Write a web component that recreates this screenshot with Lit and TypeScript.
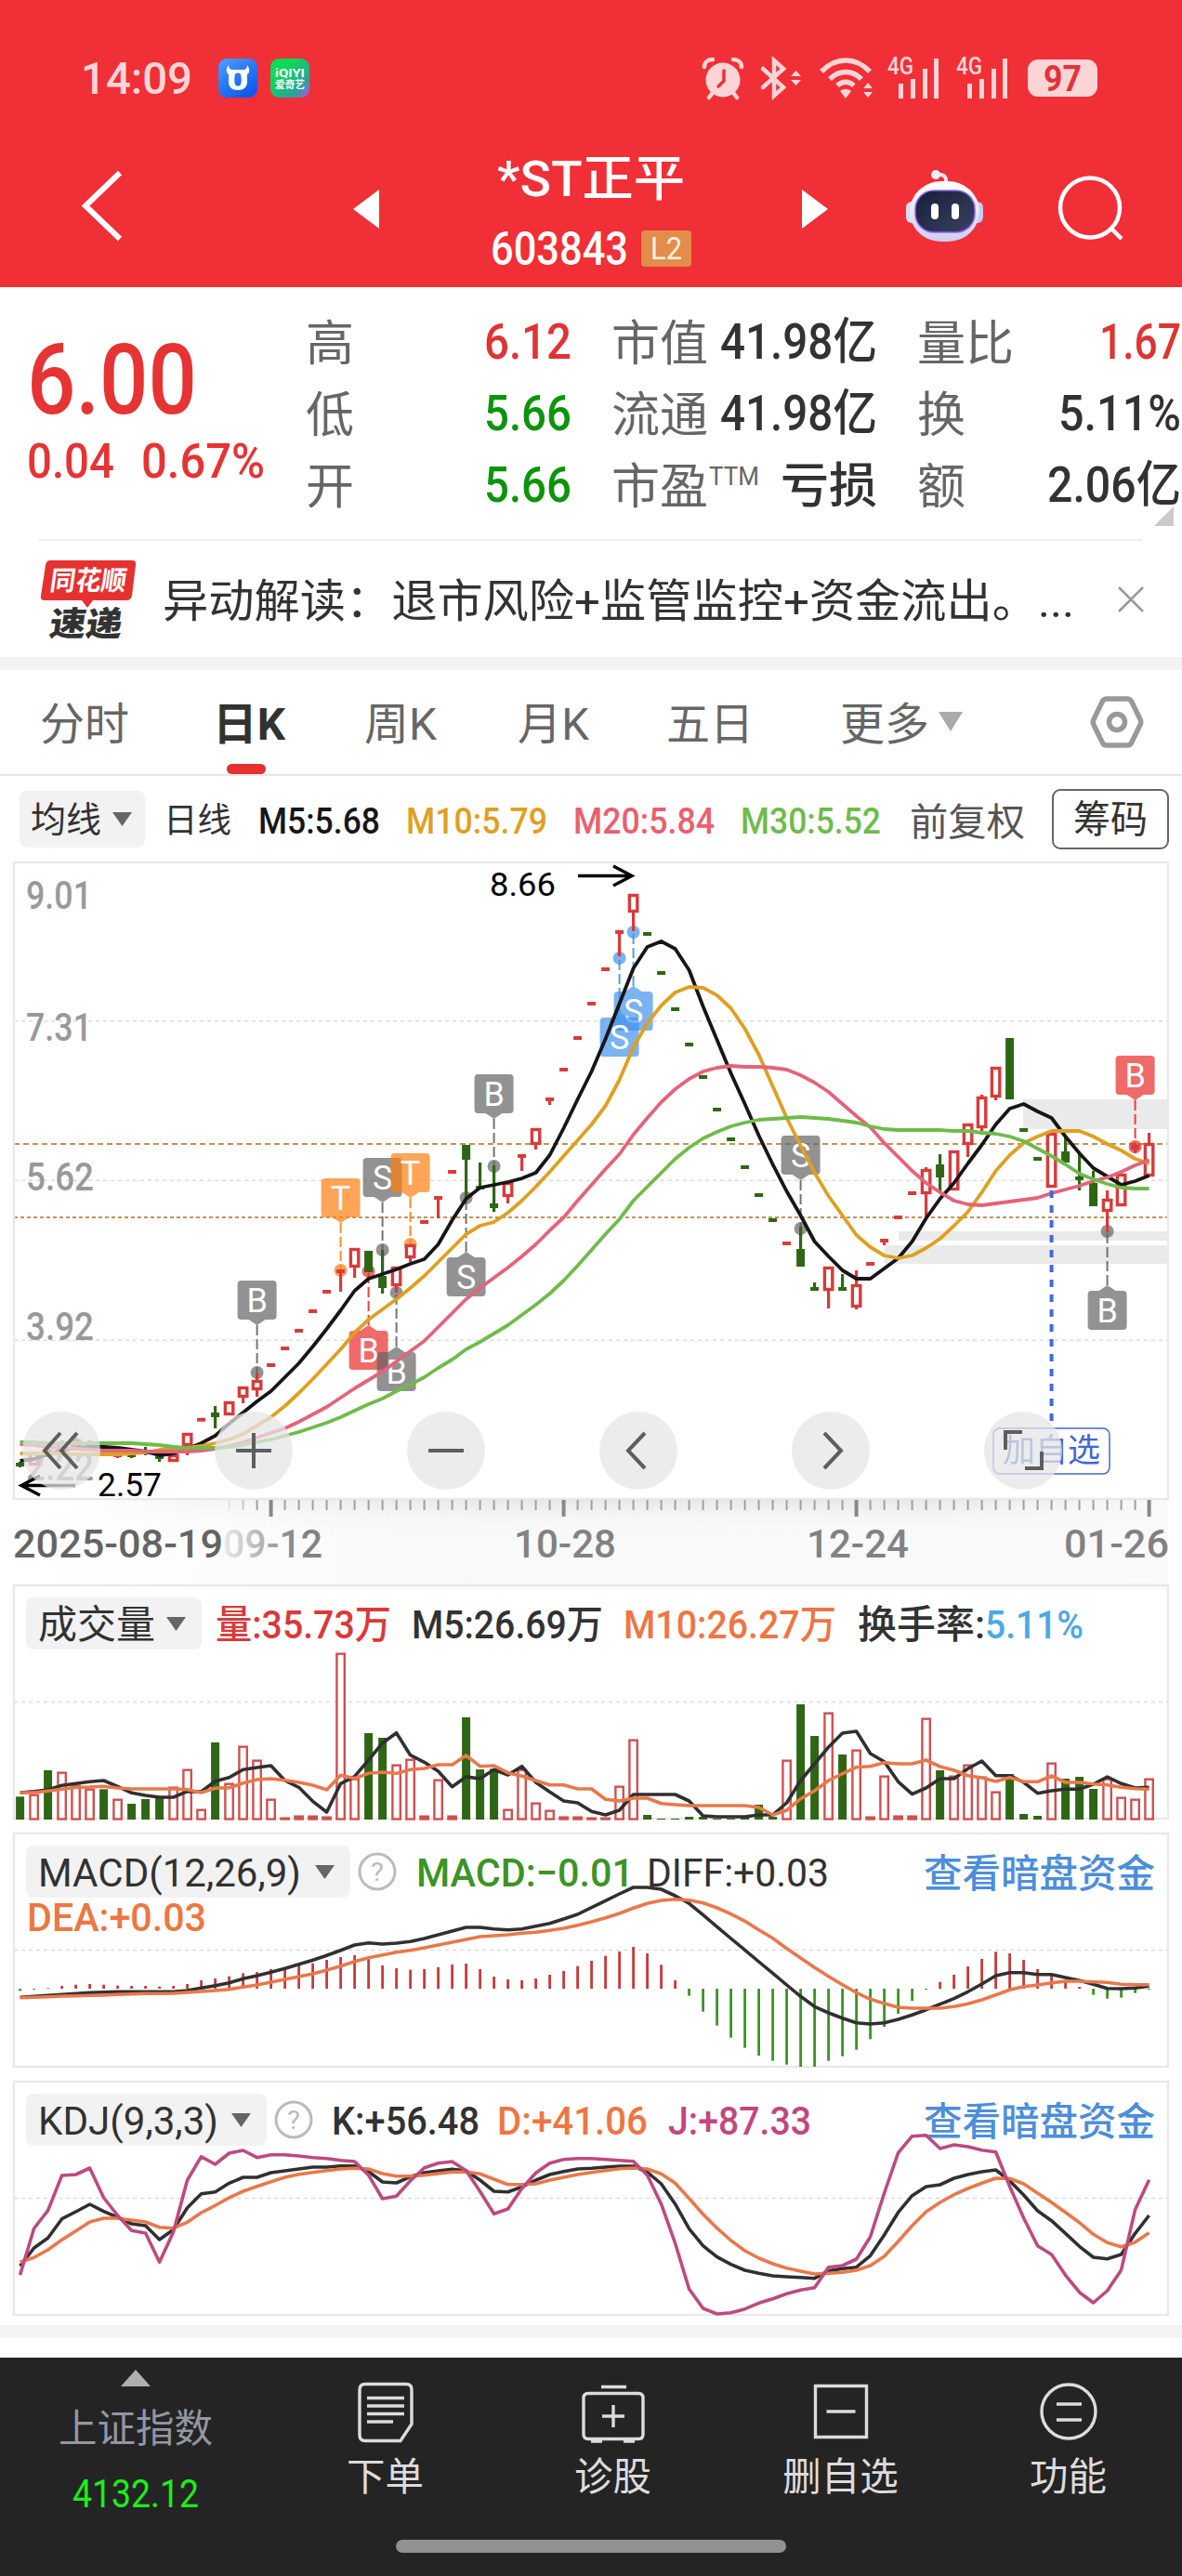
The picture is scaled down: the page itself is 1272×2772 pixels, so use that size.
import { LitElement, css, html, nothing, svg } from "lit";
import { customElement, property } from "lit/decorators.js";

type Candle = [high: number, top: number, bottom: number, low: number, up: boolean];

type Marker = {
  at: number;
  letter: string;
  tone: string;
  box: number;
  dot: number;
};

const STEP = 15;
const FIRST_X = 21.6;
const COUNT = 82;

const xOf = (index: number): number => FIRST_X + index * STEP;

const r = (high: number, top: number, bottom: number, low: number): Candle => [high, top, bottom, low, true];
const g = (high: number, top: number, bottom: number, low: number): Candle => [high, top, bottom, low, false];
// one-price day: a short dash
const up = (y: number): Candle => r(y - 2, y - 2, y + 2, y + 2);
const dn = (y: number): Candle => g(y - 2, y - 2, y + 2, y + 2);

const CANDLES: Candle[] = [
  g(1573, 1574, 1578, 1579), r(1562, 1563, 1577, 1577), g(1556, 1560, 1565, 1568), r(1550, 1552, 1560, 1562),
  r(1546, 1549, 1557, 1559), r(1550, 1552, 1556, 1562), g(1554, 1558, 1562, 1565), r(1562, 1564, 1567, 1569),
  g(1560, 1564, 1567, 1569), g(1557, 1561, 1564, 1566), g(1563, 1565, 1570, 1573), r(1564, 1565, 1573, 1573),
  r(1542, 1542, 1556, 1566), up(1527.7), g(1513, 1520, 1525, 1537), r(1508, 1508, 1523, 1523),
  r(1492, 1492, 1504, 1510), r(1477, 1485, 1496, 1503), up(1469), up(1451),
  up(1432), up(1411), up(1390), r(1366, 1366, 1370, 1390),
  r(1343, 1343, 1364, 1375), g(1346, 1346, 1369, 1369), g(1345, 1373, 1386, 1392), r(1363, 1363, 1384, 1391),
  r(1339, 1339, 1354, 1358), up(1315), r(1287, 1287, 1291, 1311), up(1261),
  g(1232, 1232, 1248, 1290), g(1251, 1276, 1279, 1279), g(1254, 1295, 1300, 1304), r(1272, 1272, 1288, 1295),
  r(1242, 1242, 1246, 1260), r(1214, 1214, 1232, 1237), r(1181, 1181, 1185, 1189), up(1151),
  up(1117), up(1080), up(1043), r(1001, 1001, 1005, 1029),
  r(962, 962, 982, 1002), dn(1005), dn(1047), dn(1086),
  dn(1124), dn(1159), dn(1194), dn(1226),
  dn(1256), dn(1286), dn(1313), up(1338),
  g(1320, 1344, 1363, 1363), g(1380, 1385, 1388, 1388), r(1363, 1363, 1389, 1408), g(1371, 1385, 1389, 1389),
  r(1367, 1382, 1407, 1409), up(1360), r(1333, 1333, 1337, 1340), up(1310),
  up(1284), r(1256, 1258, 1285, 1311), g(1242, 1253, 1267, 1282), r(1238, 1238, 1281, 1281),
  r(1209, 1209, 1232, 1245), r(1178, 1180, 1214, 1217), r(1148, 1148, 1181, 1184), g(1117, 1117, 1183, 1183),
  dn(1216), dn(1247), r(1219, 1219, 1278, 1278), g(1222, 1239, 1251, 1251),
  g(1241, 1266, 1269, 1281), g(1260, 1273, 1298, 1298), r(1281, 1290, 1304, 1326), r(1263, 1263, 1298, 1298),
  r(1231, 1232, 1237, 1241), r(1219, 1230, 1266, 1266)
];

const MA5 = [
  1572, 1570, 1565, 1561, 1558, 1557, 1557, 1558, 1560, 1562, 1566, 1564, 1559, 1553, 1545, 1532, 1520, 1508, 1497,
  1482, 1467, 1449, 1430, 1410, 1389, 1376, 1371, 1366, 1360, 1355, 1339, 1313, 1290, 1278, 1275, 1272, 1268, 1262,
  1243, 1214, 1183, 1153, 1118, 1080, 1042, 1019, 1013, 1021, 1044, 1083, 1119, 1155, 1188, 1222, 1253, 1282, 1308,
  1336, 1352, 1367, 1376, 1376, 1365, 1354, 1336, 1311, 1290, 1273, 1252, 1232, 1210, 1193, 1188, 1196, 1203, 1223,
  1241, 1257, 1266, 1275, 1271, 1265
];

const MA10 = [
  1564, 1564, 1564, 1564, 1565, 1565, 1565, 1565, 1564, 1563, 1560, 1559, 1558, 1556, 1553, 1549, 1543, 1534, 1525,
  1513, 1499, 1484, 1468, 1452, 1434, 1420, 1409, 1398, 1386, 1373, 1358, 1343, 1328, 1319, 1315, 1305, 1292, 1277,
  1261, 1244, 1227, 1210, 1190, 1162, 1127, 1101, 1082, 1068, 1062, 1063, 1071, 1085, 1107, 1135, 1169, 1203, 1233,
  1262, 1287, 1308, 1329, 1342, 1351, 1354, 1351, 1343, 1333, 1319, 1304, 1283, 1260, 1243, 1230, 1223, 1217, 1217,
  1217, 1223, 1231, 1238, 1247, 1252
];

const MA20 = [
  1554, 1555, 1557, 1558, 1559, 1560, 1561, 1561, 1561, 1562, 1562, 1562, 1562, 1561, 1559, 1556, 1552, 1547, 1542,
  1537, 1530, 1522, 1514, 1504, 1494, 1485, 1476, 1465, 1454, 1443, 1428, 1413, 1398, 1386, 1375, 1364, 1352, 1339,
  1324, 1310, 1292, 1275, 1258, 1242, 1221, 1203, 1186, 1172, 1161, 1153, 1149, 1147, 1148, 1148, 1149, 1151, 1157,
  1165, 1175, 1188, 1201, 1213, 1230, 1245, 1260, 1273, 1283, 1292, 1296, 1297, 1295, 1293, 1291, 1289, 1284, 1280,
  1276, 1271, 1267, 1261, 1254, 1248
];

const MA30 = [
  1552, 1552, 1553, 1553, 1553, 1553, 1553, 1553, 1553, 1554, 1555, 1557, 1558, 1558, 1558, 1557, 1555, 1552, 1549,
  1545, 1541, 1536, 1531, 1525, 1518, 1511, 1505, 1497, 1490, 1482, 1472, 1463, 1452, 1444, 1435, 1426, 1415, 1404,
  1392, 1378, 1362, 1345, 1328, 1312, 1292, 1277, 1262, 1247, 1235, 1225, 1218, 1212, 1208, 1205, 1204, 1203, 1202,
  1203, 1204, 1206, 1208, 1212, 1215, 1216, 1216, 1216, 1216, 1217, 1217, 1219, 1220, 1223, 1228, 1236, 1244, 1253,
  1263, 1269, 1274, 1278, 1279, 1279
];

const MARKERS: Marker[] = [
  { at: 17, letter: "B", tone: "gray", box: 1378, dot: 1477 },
  { at: 23, letter: "T", tone: "orange", box: 1268, dot: 1367 },
  { at: 26, letter: "S", tone: "gray", box: 1246, dot: 1345 },
  { at: 28, letter: "T", tone: "orange", box: 1241, dot: 1339 },
  { at: 25, letter: "B", tone: "red", box: 1432, dot: 1368 },
  { at: 27, letter: "B", tone: "gray", box: 1455, dot: 1391 },
  { at: 32, letter: "S", tone: "gray", box: 1353, dot: 1289 },
  { at: 34, letter: "B", tone: "gray", box: 1156, dot: 1255 },
  { at: 44, letter: "S", tone: "blue", box: 1067, dot: 1003 },
  { at: 43, letter: "S", tone: "blue", box: 1095, dot: 1031 },
  { at: 56, letter: "S", tone: "gray", box: 1222, dot: 1322 },
  { at: 78, letter: "B", tone: "gray", box: 1389, dot: 1325 },
  { at: 80, letter: "B", tone: "red", box: 1136, dot: 1234 }
];

// The indicator series below are stored in thirds of a pixel, measured from the top of their panel's slot.
const VOL = [
  730, 722, 645, 650, 692, 704, 706, 737, 753, 738, 735, 698, 641, 770, 555, 686, 566, 611, 737, 797, 791, 791, 794,
  266, 671, 525, 540, 626, 608, 791, 674, 791, 474, 642, 640, 770, 641, 749, 773, 794, 794, 797, 797, 695, 545, 789,
  801, 801, 795, 795, 801, 801, 798, 756, 795, 611, 432, 534, 458, 594, 578, 794, 662, 791, 791, 476, 645, 662, 626,
  665, 713, 657, 786, 792, 620, 672, 666, 705, 671, 731, 737, 671
];
const VOL_DOWN = new Set([
  0, 2, 6, 8, 9, 10, 14, 25, 26, 32, 33, 34, 45, 46, 47, 48, 49, 50, 51, 52, 53, 54, 56, 57, 59, 66, 71, 72, 73, 75,
  76, 77
]);
const VOL_MA5 = [
  717, 713, 708, 694, 688, 682, 678, 697, 718, 726, 732, 732, 713, 714, 680, 668, 643, 636, 630, 678, 700, 745, 780,
  688, 665, 612, 557, 524, 596, 619, 648, 698, 666, 672, 643, 660, 632, 684, 715, 744, 750, 778, 789, 774, 723, 723,
  723, 723, 744, 792, 795, 795, 795, 789, 789, 750, 678, 624, 570, 525, 519, 591, 617, 682, 722, 702, 672, 672, 640,
  615, 662, 662, 684, 719, 711, 706, 706, 690, 666, 688, 702, 700
];
const VOL_MA10 = [
  717, 717, 712, 706, 700, 699, 697, 702, 705, 705, 705, 705, 707, 717, 703, 701, 686, 675, 672, 677, 684, 693, 708,
  661, 671, 655, 651, 655, 643, 639, 627, 627, 597, 632, 630, 653, 664, 678, 692, 692, 705, 705, 739, 744, 735, 735,
  752, 756, 759, 759, 759, 759, 759, 765, 789, 774, 737, 711, 678, 656, 635, 632, 620, 624, 624, 612, 633, 645, 662,
  669, 681, 668, 682, 682, 663, 684, 684, 689, 692, 700, 704, 706
];

const MACD = [
  547, 543, 538, 531, 527, 525, 527, 530, 531, 531, 533, 531, 525, 513, 507, 500, 490, 486, 477, 471, 465, 458, 447,
  438, 432, 444, 465, 474, 479, 477, 471, 462, 459, 477, 501, 510, 513, 507, 495, 483, 467, 450, 434, 420, 405, 426,
  463, 513, 563, 614, 659, 698, 731, 756, 773, 785, 792, 792, 773, 758, 737, 703, 663, 621, 579, 543, 518, 495, 468,
  444, 421, 426, 447, 477, 495, 512, 534, 560, 572, 569, 554, 543
];
const DIFF = [
  568, 565, 562, 559, 556, 553, 551, 550, 550, 550, 550, 550, 546, 538, 530, 521, 508, 498, 487, 475, 461, 448, 433,
  416, 399, 392, 396, 393, 388, 378, 366, 354, 342, 342, 347, 350, 347, 338, 329, 315, 300, 278, 256, 234, 213, 213,
  219, 240, 265, 302, 340, 378, 415, 453, 490, 528, 565, 598, 618, 635, 650, 654, 650, 639, 625, 608, 590, 572, 550,
  525, 498, 488, 488, 494, 494, 504, 514, 526, 539, 540, 538, 532
];
const DEA = [
  569, 568, 566, 564, 563, 562, 561, 559, 557, 556, 556, 555, 552, 549, 546, 542, 535, 528, 519, 510, 501, 492, 480,
  467, 452, 440, 431, 422, 416, 408, 399, 390, 381, 372, 369, 366, 361, 358, 352, 345, 335, 324, 311, 297, 280, 265,
  255, 251, 254, 263, 279, 299, 322, 350, 377, 410, 441, 472, 500, 527, 553, 574, 588, 600, 603, 603, 603, 598, 589,
  576, 560, 544, 533, 528, 521, 516, 516, 518, 520, 526, 527, 527
];

const K = [
  625, 567, 535, 473, 450, 426, 449, 468, 489, 495, 540, 508, 437, 392, 386, 358, 339, 339, 324, 318, 312, 306, 306,
  302, 302, 320, 354, 357, 337, 324, 318, 313, 318, 348, 384, 386, 370, 348, 330, 320, 312, 310, 306, 303, 303, 322,
  360, 425, 505, 560, 596, 620, 639, 649, 657, 660, 662, 665, 641, 634, 629, 592, 525, 452, 398, 369, 363, 342, 330,
  321, 315, 350, 396, 447, 479, 520, 562, 597, 602, 588, 520, 462
];
const D = [
  613, 598, 573, 541, 512, 483, 471, 471, 477, 483, 500, 503, 484, 453, 430, 405, 384, 368, 353, 339, 329, 323, 317,
  312, 310, 312, 327, 335, 335, 332, 327, 322, 321, 328, 345, 362, 362, 360, 348, 339, 330, 323, 317, 311, 309, 312,
  328, 358, 407, 458, 503, 543, 576, 600, 618, 632, 642, 651, 649, 646, 639, 624, 594, 546, 495, 450, 420, 395, 375,
  358, 342, 343, 360, 390, 420, 452, 485, 523, 550, 563, 548, 518
];
const J = [
  654, 504, 446, 333, 330, 309, 405, 462, 511, 519, 613, 515, 348, 272, 297, 261, 252, 275, 266, 266, 270, 275, 278,
  284, 288, 332, 408, 400, 350, 308, 293, 288, 317, 385, 457, 441, 375, 325, 293, 281, 278, 278, 281, 284, 287, 332,
  425, 552, 700, 762, 780, 776, 764, 745, 731, 715, 703, 695, 629, 624, 603, 531, 390, 260, 206, 203, 246, 234, 240,
  251, 257, 368, 470, 560, 588, 655, 710, 744, 705, 638, 443, 347
];

const thirds = (values: number[]): number[] => values.map((value) => value / 3);

const line = (values: number[], name: string) =>
  svg`<polyline class="line ${name}" points=${values.map((y, i) => `${xOf(i).toFixed(1)},${y.toFixed(1)}`).join(" ")} />`;

const fit = (text: string, width: number, size: number, name = "") => html`
  <svg class="fit ${name}" width=${width} height=${size}>
    <text x="0" y=${size * 0.857} font-size=${size} textLength=${width} lengthAdjust="spacingAndGlyphs">${text}</text>
  </svg>
`;

const label = (text: string, x: number, middle: number, width: number, size: number, name: string) =>
  svg`<text class=${name} x=${x} y=${middle + size * 0.357} font-size=${size} textLength=${width} lengthAdjust="spacingAndGlyphs">${text}</text>`;

const caret = html`<svg class="caret" width="21" height="15" viewBox="0 0 21 15"><path d="M0 0h21L10.500 15z" /></svg>`;

const shared = css`
  svg {
    display: block;
    flex: none;
    overflow: visible;
  }

  text {
    fill: currentColor;
    font-family: Roboto, "Noto Sans CJK SC", sans-serif;
    white-space: pre;
  }

  .medium {
    font-weight: 500;
  }

  .bold {
    font-weight: 700;
  }

  .caret {
    fill: #666;
  }

  .chip {
    align-items: center;
    background: #f2f2f2;
    border-radius: 8px;
    box-sizing: border-box;
    display: flex;
    justify-content: space-between;
  }

  .line {
    fill: none;
    stroke-linejoin: round;
    stroke-width: 3.800;
  }

  .grid {
    stroke: #dcdcdc;
    stroke-dasharray: 4 4;
    stroke-width: 1.5;
  }

  .frame {
    fill: none;
    stroke: #e9e9e9;
    stroke-width: 2.400;
  }
`;

@customElement("status-bar")
export class StatusBar extends LitElement {
  private renderSignal() {
    return html`
      <svg class="signal" width="56" height="44" viewBox="0 0 56 44">
        ${label("4G", 0, 9, 28, 25, "medium")}
        <path d="M12 28h5v16h-5zM25 23h5v21h-5zM38 12h5v32h-5zM50 1h5v43h-5z" />
      </svg>
    `;
  }

  protected render() {
    return html`
      <div class="bar">
        ${fit("14:09", 120, 48, "medium time")}
        <svg class="app" width="42" height="42" viewBox="0 0 42 42">
          <defs>
            <linearGradient id="blue" x1="0" y1="0" x2=".7" y2="1">
              <stop offset="0" stop-color="#4ba0ff" />
              <stop offset="1" stop-color="#0d58ea" />
            </linearGradient>
          </defs>
          <rect width="42" height="42" rx="9" fill="url(#blue)" />
          <path
            d="M11 7c0 3 1 4 3 5h14c2-1 3-2 3-5 3 4 3 8 0 10v8c0 6-4 9-10 9s-10-3-10-9v-8c-3-2-3-6 0-10zM18 17c-1 5-1 8 0 11 1 2 5 2 6 0 1-3 1-6 0-11-1-2-5-2-6 0z"
            fill="#fff"
            fill-rule="evenodd"
          />
        </svg>
        <svg class="app second" width="42" height="42" viewBox="0 0 42 42">
          <defs>
            <linearGradient id="green" x1="0" y1="0" x2="1" y2="1">
              <stop offset="0.300" stop-color="#0bd957" />
              <stop offset="0.750" stop-color="#26a39b" />
              <stop offset="1" stop-color="#c44cf2" />
            </linearGradient>
          </defs>
          <rect width="42" height="42" rx="9" fill="url(#green)" />
          ${label("iQIYI", 5, 15, 32, 13, "bold")} ${label("爱奇艺", 5, 28, 32, 11, "bold")}
        </svg>
        <svg class="alarm" width="44" height="44" viewBox="0 0 44 44">
          <circle cx="22" cy="24" r="18.500" />
          <path class="stroke" d="M2 10c0-5 4-8 9-8M42 10c0-5-4-8-9-8M10 39l-3 4M34 39l3 4" />
          <path class="hand" d="M23 14v11l-6 6" />
        </svg>
        <svg class="bt" width="44" height="44" viewBox="0 0 44 44">
          <path class="stroke" d="M2 12l22 20-10 9V3l10 9L2 32" />
          <path d="M32 20l5.500-6 5.500 6zM32 24l5.500 6 5.500-6z" />
        </svg>
        <svg class="wifi" width="58" height="44" viewBox="0 0 58 44">
          <path class="arc" d="M2 15c15-16 37-16 52 0M11 23c10-10 24-10 34 0M19 30c6-5 12-5 18 0" />
          <path d="M22 36c4-3 8-3 12 0l-6 8zM47 33l5-6 5 6zM47 37l5 6 5-6z" />
        </svg>
        ${this.renderSignal()} ${this.renderSignal()}
        <div class="battery">${fit("97", 41, 38, "bold")}</div>
      </div>
    `;
  }

  static styles = [
    shared,
    css`
      :host {
        display: block;
      }

      .bar {
        align-items: center;
        box-sizing: border-box;
        color: #fdd5d6;
        display: flex;
        fill: currentColor;
        height: 125px;
        padding: 42px 0 0 87px;
      }

      .app {
        color: #fff;
        margin-left: 28px;
      }

      .second {
        margin-left: 14px;
      }

      .alarm {
        margin-left: 423px;
      }

      .bt {
        margin-left: 19px;
      }

      .wifi {
        margin-left: 19px;
      }

      .signal {
        margin-left: 15px;
      }

      .signal + .signal {
        margin-left: 18px;
      }

      .stroke,
      .hand,
      .arc {
        fill: none;
        stroke: currentColor;
        stroke-linecap: round;
        stroke-width: 4.500;
      }

      .arc {
        stroke-linecap: butt;
        stroke-width: 5.500;
      }

      .hand {
        stroke: #f12f37;
        stroke-width: 3.500;
      }

      .battery {
        align-items: center;
        background: currentColor;
        border-radius: 11px;
        display: flex;
        height: 40px;
        justify-content: center;
        margin-left: 21px;
        width: 75px;
      }

      .battery .fit {
        color: #e2333a;
      }
    `
  ];
}

@customElement("stock-header")
export class StockHeader extends LitElement {
  @property() name = "";

  @property() code = "";

  protected render() {
    return html`
      <div class="header">
        <svg class="back" width="60" height="84" viewBox="80 180 60 84">
          <path class="stroke thick" d="M129 186L92 221.500L129 257" />
        </svg>
        <svg class="prev" width="28" height="42" viewBox="0 0 28 42"><path d="M28 0v42L0 21z" /></svg>
        <div class="title">
          ${fit(this.name, 202, 53, "medium")}
          <div class="code">
            ${fit(this.code, 148, 50, "medium")}
            <div class="badge">${fit("L2", 34, 33)}</div>
          </div>
        </div>
        <svg class="next" width="28" height="42" viewBox="0 0 28 42"><path d="M0 0v42l28-21z" /></svg>
        <svg class="robot" width="94" height="84" viewBox="970 180 94 84">
          <defs>
            <linearGradient id="head" x1="0" y1="0" x2="0" y2="1">
              <stop offset="0" stop-color="#fff" />
              <stop offset="1" stop-color="#cfccf3" />
            </linearGradient>
            <linearGradient id="face" x1="0" y1="0" x2="1" y2="1">
              <stop offset="0" stop-color="#16203a" />
              <stop offset="1" stop-color="#3c4063" />
            </linearGradient>
          </defs>
          <path d="M1017 198c3-7-1-11-9-10" fill="none" stroke="#e4e2f8" stroke-width="4" />
          <circle cx="1007" cy="188" r="5" fill="#f0eefc" />
          <rect x="975" y="217" width="14" height="23" rx="6" fill="#d9dcf8" />
          <rect x="1044" y="217" width="14" height="23" rx="6" fill="#c6c9f1" />
          <rect x="979" y="195" width="75" height="65" rx="34" fill="url(#head)" />
          <rect x="985" y="205" width="64" height="45" rx="20" fill="url(#face)" stroke="#8a67ea" stroke-width="1.500" />
          <rect x="1002" y="219" width="8" height="17" rx="4" fill="#fff" />
          <rect x="1024" y="219" width="8" height="17" rx="4" fill="#fff" />
        </svg>
        <svg class="search" width="76" height="84" viewBox="1136 180 76 84">
          <circle class="stroke" cx="1173" cy="223.500" r="32" />
          <path class="stroke" d="M1195 245l12 12" />
        </svg>
      </div>
    `;
  }

  static styles = [
    shared,
    css`
      :host {
        display: block;
      }

      .header {
        align-items: flex-start;
        color: #fff;
        display: flex;
        fill: #fff;
        height: 184px;
      }

      .back {
        margin: 55px 0 0 80px;
      }

      .prev {
        margin: 79px 0 0 240px;
      }

      .next {
        margin: 79px 0 0 82px;
      }

      .title {
        align-items: center;
        display: flex;
        flex-direction: column;
        gap: 23px;
        margin-left: 83px;
        padding-top: 41px;
        width: 290px;
      }

      .code {
        align-items: center;
        display: flex;
        gap: 14px;
      }

      .badge {
        align-items: center;
        background: #e28d4b;
        border-radius: 4px;
        color: #fff3dc;
        display: flex;
        height: 39px;
        justify-content: center;
        width: 54px;
      }

      .robot {
        margin: 55px 0 0 79px;
      }

      .search {
        margin: 55px 0 0 72px;
      }

      .stroke {
        fill: none;
        stroke: #fff;
        stroke-width: 4.500;
      }

      .thick {
        stroke-width: 6;
      }
    `
  ];
}

@customElement("quote-panel")
export class QuotePanel extends LitElement {
  protected render() {
    return html`
      <div class="quote">
        <div class="price">
          ${fit("6.00", 183, 105, "medium")}
          <div class="change">${fit("0.04", 94, 51, "medium")} ${fit("0.67%", 133, 51, "medium")}</div>
        </div>
        <div class="figures">
          <div class="cell"><span>高</span>${fit("6.12", 94, 53, "medium up")}</div>
          <div class="cell"><span>市值</span>${fit("41.98亿", 169, 53, "medium")}</div>
          <div class="cell"><span>量比</span>${fit("1.67", 88, 53, "medium up")}</div>
          <div class="cell"><span>低</span>${fit("5.66", 94, 53, "medium down")}</div>
          <div class="cell"><span>流通</span>${fit("41.98亿", 169, 53, "medium")}</div>
          <div class="cell"><span>换</span>${fit("5.11%", 132, 53, "medium")}</div>
          <div class="cell"><span>开</span>${fit("5.66", 94, 53, "medium down")}</div>
          <div class="cell">
            <span>市盈</span><div class="ttm">${fit("TTM", 54, 27)}</div>
            ${fit("亏损", 104, 52, "medium")}
          </div>
          <div class="cell"><span>额</span>${fit("2.06亿", 144, 53, "medium")}</div>
        </div>
      </div>
      <div class="fold"><svg width="21" height="21" viewBox="0 0 21 21"><path d="M21 0v21H0z" /></svg></div>
      <div class="rule"></div>
      <div class="news">
        <svg width="104" height="86" viewBox="43 601 104 86">
          <path
            d="M54 602h88q5 0 4 5l-4 33q-1 5-6 5h-36l-6 8-6-8H48q-5 0-4-5l5-33q1-5 5-5z"
            fill="#e63131"
          />
          <g transform="skewX(-8)">
            ${label("同花顺", 142, 624, 82, 29, "bold white")} ${label("速递", 148, 670, 78, 36, "black")}
          </g>
        </svg>
        ${fit("异动解读：退市风险+监管监控+资金流出。...", 981, 49, "text")}
        <svg class="close" width="28" height="28" viewBox="0 0 28 28"><path d="M1 1l26 26M27 1L1 27" /></svg>
      </div>
    `;
  }

  static styles = [
    shared,
    css`
      :host {
        display: block;
      }

      .quote {
        display: flex;
        height: 235px;
      }

      .price {
        box-sizing: border-box;
        color: #e63333;
        display: flex;
        flex-direction: column;
        gap: 10px;
        padding: 45px 0 0 29px;
        width: 329px;
      }

      .change {
        display: flex;
        gap: 29px;
      }

      .figures {
        align-content: start;
        color: #323232;
        column-gap: 43px;
        display: grid;
        grid-template-columns: 286px 286px 284px;
        grid-auto-rows: 77px;
        padding-top: 19px;
      }

      .cell {
        align-items: center;
        display: flex;
        justify-content: space-between;
      }

      .cell span {
        color: #666;
        font: 52px "Noto Sans CJK SC", sans-serif;
        line-height: 74px;
        margin-bottom: 3px;
      }

      .ttm {
        align-self: flex-start;
        color: #666;
        margin: 16px 20px 0 -2px;
      }

      .up {
        color: #e03333;
      }

      .down {
        color: #0c940c;
      }

      .fold {
        display: flex;
        fill: #cacaca;
        height: 35px;
        padding-left: 1242px;
      }

      .rule {
        background: #eee;
        height: 2px;
        margin: 0 42px;
      }

      .news {
        align-items: center;
        color: #323232;
        display: flex;
        height: 125px;
        padding-left: 43px;
      }

      .news .text {
        margin: 4px 0 0 28px;
      }

      .white {
        fill: #fff;
      }

      .black {
        fill: #333;
        font-weight: 900;
      }

      .close {
        margin-left: 47px;
        stroke: #999;
        stroke-width: 2.500;
      }
    `
  ];
}

@customElement("period-tabs")
export class PeriodTabs extends LitElement {
  protected render() {
    return html`
      <div class="tabs">
        <div class="tab">${fit("分时", 96, 48)}</div>
        <div class="tab active">${fit("日K", 78, 48, "bold")}<i></i></div>
        <div class="tab">${fit("周K", 78, 48)}</div>
        <div class="tab">${fit("月K", 77, 48)}</div>
        <div class="tab">${fit("五日", 94, 48)}</div>
        <div class="tab more">
          ${fit("更多", 96, 48)}
          <svg width="26" height="21" viewBox="0 0 26 21"><path d="M0 0h26L13 21z" fill="#aaa" /></svg>
        </div>
        <svg class="gear" width="58" height="56" viewBox="0 0 58 56">
          <path d="M18 3h22q3 0 4.500 2.500L54 25q1.500 3 0 6L44.500 50.500Q43 53 40 53H18q-3 0-4.500-2.500L4 31q-1.500-3 0-6l9.500-19.500Q15 3 18 3z" />
          <circle cx="29" cy="28" r="8.500" />
        </svg>
      </div>
      <div class="averages">
        <div class="chip">${fit("均线", 76, 38)} ${caret}</div>
        ${fit("日线", 73, 37)} ${fit("M5:5.68", 131, 39.5, "medium m5")} ${fit("M10:5.79", 152, 39.5, "medium m10")}
        ${fit("M20:5.84", 152, 39.5, "medium m20")} ${fit("M30:5.52", 151, 39.5, "medium m30")}
        ${fit("前复权", 124, 41, "adjust")}
        <div class="button">${fit("筹码", 80, 41)}</div>
      </div>
    `;
  }

  static styles = [
    shared,
    css`
      :host {
        display: block;
      }

      .tabs {
        border-bottom: 2px solid #e7e7e7;
        border-top: 14px solid #f3f3f3;
        color: #666;
        display: grid;
        grid-template-columns: 186px 163px 165px 160px 187px 269px 58px;
        height: 112px;
        padding-left: 43px;
      }

      .tab {
        display: flex;
        flex-direction: column;
        padding-top: 34px;
      }

      .active {
        color: #323232;
      }

      .active i {
        background: #e63131;
        border-radius: 6px;
        height: 11px;
        margin: auto 0 0 15px;
        width: 42px;
      }

      .more {
        flex-direction: row;
        gap: 10px;
      }

      .more svg:last-child {
        margin-top: 11px;
      }

      .gear {
        fill: none;
        margin-top: 28px;
        stroke: #999;
        stroke-width: 5.500;
      }

      .averages {
        align-items: center;
        color: #323232;
        display: grid;
        grid-template-columns: 155px 102px 159px 180px 180px 182px 153px 126px;
        height: 92px;
        padding-left: 21px;
      }

      .chip {
        height: 61px;
        padding: 0 14px 0 12px;
        width: 135px;
      }

      .averages > .fit {
        margin-top: 3px;
      }

      .m5 {
        color: #161616;
      }

      .m10 {
        color: #dfa020;
      }

      .m20 {
        color: #e9606f;
      }

      .m30 {
        color: #6fbb4b;
      }

      .averages > .adjust {
        color: #555;
        margin-top: 7px;
      }

      .button {
        align-items: center;
        border: 2px solid #666;
        border-radius: 9px;
        box-sizing: border-box;
        display: flex;
        height: 65px;
        justify-content: center;
      }
    `
  ];
}

@customElement("candle-chart")
export class CandleChart extends LitElement {
  private renderCandle([high, top, bottom, low, rising]: Candle, index: number) {
    const x = xOf(index);
    const height = Math.max(bottom - top, 4);
    const name = rising ? "rise" : "fall";
    const hollow = rising && height > 6;
    return svg`
      <g class=${name}>
        ${high < top ? svg`<line x1=${x} x2=${x} y1=${high} y2=${top} />` : nothing}
        ${low > bottom ? svg`<line x1=${x} x2=${x} y1=${bottom} y2=${low} />` : nothing}
        ${hollow
          ? svg`<rect class="hollow" x=${x - 4.2} y=${top + 1.5} width="8.4" height=${height - 3} />`
          : svg`<rect x=${x - 4.5} y=${top} width="9" height=${height} />`}
      </g>
    `;
  }

  private renderMarker({ at, letter, tone, box, dot }: Marker) {
    const x = xOf(at);
    const below = box > dot;
    const tip = below ? box - 6 : box + 48;
    const edge = below ? box : box + 42;
    return svg`
      <g class=${tone}>
        <line class="lead" x1=${x} x2=${x} y1=${tip} y2=${dot} />
        <circle cx=${x} cy=${dot} r="7" />
        <path d="M${x - 17} ${box}h34q4 0 4 4v34q0 4-4 4h-34q-4 0-4-4v-34q0-4 4-4z" />
        <path d="M${x - 9} ${edge}L${x} ${tip}L${x + 9} ${edge}z" />
        <text class="letter" x=${x} y=${box + 34} font-size="36">${letter}</text>
      </g>
    `;
  }

  private renderTick(index: number) {
    const major = (index - 18) % 21 === 0;
    const x = xOf(index);
    const opacity = index === 15 ? 0.2 : index === 16 ? 0.5 : 1;
    return svg`<line class=${major ? "tick major" : "tick"} x1=${x} x2=${x} y1="1614" y2=${major ? 1632 : 1625} opacity=${opacity} />`;
  }

  private renderControl(x: number, path: string) {
    return svg`
      <circle class="control" cx=${x} cy="1561" r="42" />
      <path class="glyph" transform="translate(${x} 1561)" d=${path} />
    `;
  }

  protected render() {
    const ticks = Array.from({ length: COUNT - 15 }, (_, i) => i + 15);
    return html`
      <svg width="1272" height="779" viewBox="0 927 1272 779">
        <defs>
          <linearGradient id="across" x1="0" y1="0" x2="1" y2="0">
            <stop offset="0" stop-color="#fff" />
            <stop offset="0.350" stop-color="#f9f9f9" />
            <stop offset="1" stop-color="#fafafa" />
          </linearGradient>
          <linearGradient id="down" x1="0" y1="0" x2="0" y2="1">
            <stop offset="0" stop-color="#e2e2e2" stop-opacity="0.800" />
            <stop offset="1" stop-color="#f9f9f9" stop-opacity="0" />
          </linearGradient>
          <linearGradient id="edges" x1="0" y1="0" x2="1" y2="0">
            <stop offset="0.050" stop-color="#fff" stop-opacity="0" />
            <stop offset="0.400" stop-color="#fff" />
            <stop offset="0.800" stop-color="#fff" />
            <stop offset="1" stop-color="#fff" stop-opacity="0" />
          </linearGradient>
          <mask id="middle"><rect x="15" y="1613" width="1242" height="50" fill="url(#edges)" /></mask>
          <linearGradient id="fade" gradientUnits="userSpaceOnUse" x1="236" y1="0" x2="320" y2="0">
            <stop offset="0" stop-color="#828282" stop-opacity="0.100" />
            <stop offset="1" stop-color="#828282" />
          </linearGradient>
        </defs>
        <rect x="15" y="1613" width="1242" height="98" fill="url(#across)" />
        <rect x="15" y="1613" width="1242" height="36" fill="url(#down)" mask="url(#middle)" />

        <path class="zone" d="M1101 1183h156v32h-156zM967 1325h290v10H967zM951.600 1340H1257v20H951.600z" />
        <path class="grid" d="M15 1098.700h1242M15 1270.300h1242M15 1442.300h1242" />
        <path class="level" d="M15 1231h1242" />
        <path class="level tight" d="M15 1310h1242" />
        ${label("9.01", 28, 963, 71, 42, "medium scale")} ${label("7.31", 28, 1105, 71, 42, "medium scale")}
        ${label("5.62", 28, 1266, 73, 42, "medium scale")} ${label("3.92", 28, 1427, 73, 42, "medium scale")}
        ${label("2.22", 28, 1578, 73, 42, "medium scale")}
        <rect class="frame" x="15" y="928" width="1242" height="685" />

        ${MARKERS.map((marker) => this.renderMarker(marker))}
        ${CANDLES.map((candle, index) => this.renderCandle(candle, index))}
        ${line(MA5, "m5")} ${line(MA10, "m10")} ${line(MA20, "m20")} ${line(MA30, "m30")}

        ${label("8.66", 527, 951, 71, 35.5, "ink")}
        <path class="arrow" d="M622 942.500h58M660 932l20 10.500-20 10.500" />
        ${label("2.57", 105, 1597, 69, 35.5, "ink")}
        <path class="arrow" d="M81 1598.500H23M43 1588l-20 10.500 20 10.500" />

        <line class="added" x1=${xOf(74)} x2=${xOf(74)} y1="1281" y2="1537" />
        <rect class="tag" x="1069" y="1537" width="125" height="49" rx="7" />
        ${label("加自选", 1079, 1561, 105, 35, "tag-text")}

        ${this.renderControl(66, "M-1-19L-18 0L-1 19M17-19L0 0L17 19")}
        ${this.renderControl(273, "M-19 0h38M0-19v38")}
        ${this.renderControl(480, "M-19 0h38")}
        ${this.renderControl(687, "M7-19L-11 0L7 19")}
        ${this.renderControl(894, "M-7-19L11 0L-7 19")}
        ${this.renderControl(1101, "M-1-20h-18v19M2 19h18v-18")}

        ${ticks.map((index) => this.renderTick(index))}
        ${label("2025-08-19", 14, 1661.500, 226, 42, "date strong")}
        ${label("09-12", 240, 1661.500, 107, 42, "date faded")} ${label("10-28", 553, 1661.500, 110, 42, "date")}
        ${label("12-24", 868, 1661.500, 110, 42, "date")} ${label("01-26", 1145, 1661.500, 113, 42, "date")}
      </svg>
    `;
  }

  static styles = [
    shared,
    css`
      :host {
        display: block;
      }

      .zone {
        fill: #eaeaea;
      }

      .level {
        stroke: #bf9458;
        stroke-dasharray: 6 4;
        stroke-width: 2;
      }

      .tight {
        stroke-dasharray: 4 3;
      }

      .scale {
        fill: #999;
      }

      .rise {
        fill: #d93a3a;
        stroke: #d93a3a;
      }

      .fall {
        fill: #2f6615;
        stroke: #2f6615;
      }

      .rise line,
      .fall line {
        stroke-width: 3.200;
      }

      .rise rect,
      .fall rect {
        stroke: none;
      }

      .rise .hollow {
        fill: #fff;
        stroke: #d93a3a;
        stroke-width: 3.400;
      }

      .m5 {
        stroke: #161616;
      }

      .m10 {
        stroke: #dfa020;
      }

      .m20 {
        stroke: #e5637a;
      }

      .m30 {
        stroke: #6fbb4b;
      }

      .ink {
        fill: #000;
      }

      .arrow {
        fill: none;
        stroke: #000;
        stroke-width: 3.400;
      }

      .gray {
        --tone: 100, 100, 100;
      }

      .orange {
        --tone: 253, 127, 16;
      }

      .red {
        --tone: 234, 43, 43;
      }

      .blue {
        --tone: 67, 146, 236;
      }

      .gray path,
      .orange path,
      .red path,
      .blue path,
      .gray circle,
      .orange circle,
      .red circle,
      .blue circle {
        fill: rgba(var(--tone), 0.7);
      }

      .lead {
        stroke: rgba(var(--tone), 0.9);
        stroke-dasharray: 11 4;
        stroke-width: 2;
      }

      .letter {
        fill: #fff;
        text-anchor: middle;
      }

      .added {
        stroke: #4169e1;
        stroke-dasharray: 8 8;
        stroke-width: 4;
      }

      .tag {
        fill: #fff;
        stroke: #4169c9;
        stroke-width: 1.500;
      }

      .tag-text {
        fill: #3f66d8;
      }

      .control {
        fill: rgba(229, 229, 229, 0.75);
      }

      .glyph {
        fill: none;
        stroke: #5e5e5e;
        stroke-width: 4;
      }

      .tick {
        stroke: #a0a0a0;
        stroke-width: 2;
      }

      .major {
        stroke: #888;
        stroke-width: 4;
      }

      .date {
        fill: #828282;
        font-weight: 500;
      }

      .strong {
        fill: #646464;
      }

      .faded {
        fill: url(#fade);
      }
    `
  ];
}

@customElement("indicator-panels")
export class IndicatorPanels extends LitElement {
  private renderVolumeBar(value: number, index: number) {
    const x = xOf(index);
    const top = value / 3;
    const height = 268 - top;
    return VOL_DOWN.has(index)
      ? svg`<rect class="vol-down" x=${x - 4.5} y=${top} width="9" height=${height} />`
      : svg`<rect class=${height < 7 ? "vol-up flat" : "vol-up"} x=${x - 4.2} y=${top + 1} width="8.4" height=${height - 1.5} />`;
  }

  private renderMacdBar(value: number, index: number) {
    const x = xOf(index);
    return svg`<line class=${value > 540 ? "macd-down" : "macd-up"} x1=${x} x2=${x} y1="180" y2=${value / 3} />`;
  }

  private renderHelp() {
    return html`
      <svg class="help" width="42" height="42" viewBox="0 0 42 42">
        <circle cx="21" cy="21" r="19" />
        ${label("?", 14, 21, 14, 28, "mark")}
      </svg>
    `;
  }

  protected render() {
    return html`
      <div class="panel volume">
        <div class="head">
          <div class="chip vol-chip">${fit("成交量", 126, 42)} ${caret}</div>
          ${fit("量:35.73万", 189, 42, "medium red")} ${fit("M5:26.69万", 206, 42, "medium vol5")}
          ${fit("M10:26.27万", 229, 42, "medium orange vol10")} ${fit("换手率:", 137, 42, "medium turn")}
          ${fit("5.11%", 106, 42, "medium sky")}
        </div>
        <svg width="1272" height="267" viewBox="0 16 1272 267">
          <rect class="frame" x="15" y="16" width="1242" height="251" />
          <path class="grid" d="M15 141.500h1242" />
          ${VOL.map((value, index) => this.renderVolumeBar(value, index))}
          ${line(thirds(VOL_MA5), "dark")} ${line(thirds(VOL_MA10), "amber")}
        </svg>
      </div>
      <div class="panel macd">
        <div class="head">
          <div class="chip macd-chip">${fit("MACD(12,26,9)", 283, 43)} ${caret}</div>
          ${this.renderHelp()} ${fit("MACD:−0.01", 234, 43, "medium green macd-value")}
          ${fit("DIFF:+0.03", 196, 43, "diff")}
          <div class="link">查看暗盘资金</div>
        </div>
        <div class="second">${fit("DEA:+0.03", 193, 43, "medium orange")}</div>
        <svg width="1272" height="267" viewBox="0 13 1272 267">
          <rect class="frame" x="15" y="13" width="1242" height="251" />
          <path class="grid" d="M15 138.500h1242" />
          ${MACD.map((value, index) => this.renderMacdBar(value, index))}
          ${line(thirds(DIFF), "dark")} ${line(thirds(DEA), "amber")}
        </svg>
      </div>
      <div class="panel kdj">
        <div class="head">
          <div class="chip kdj-chip">${fit("KDJ(9,3,3)", 194, 43)} ${caret}</div>
          ${this.renderHelp()} ${fit("K:+56.48", 159, 43, "medium k-value")}
          ${fit("D:+41.06", 162, 43, "medium orange d-value")} ${fit("J:+87.33", 154, 43, "medium plum j-value")}
          <div class="link">查看暗盘资金</div>
        </div>
        <svg width="1272" height="262" viewBox="0 10 1272 262">
          <rect class="frame" x="15" y="10" width="1242" height="251" />
          <path class="grid" d="M15 135.500h1242" />
          ${line(thirds(K), "dark")} ${line(thirds(D), "amber")} ${line(thirds(J), "purple")}
        </svg>
      </div>
    `;
  }

  static styles = [
    shared,
    css`
      :host {
        color: #323232;
        display: block;
      }

      .panel {
        display: grid;
        grid-template-columns: 1272px;
      }

      .panel > * {
        grid-area: 1 / 1;
      }

      .head {
        align-items: center;
        align-self: start;
        box-sizing: border-box;
        display: flex;
        height: 56px;
        margin-top: 13px;
        padding: 0 29px 0 28px;
      }

      .volume .fit {
        margin-top: 2px;
      }

      .second {
        padding: 68px 0 0 29px;
      }

      .chip {
        height: 56px;
      }

      .vol-chip {
        margin-right: 15px;
        padding: 0 17px 0 13px;
        width: 189px;
      }

      .vol5 {
        margin-left: 22px;
      }

      .vol10 {
        margin-left: 22px;
      }

      .turn {
        margin-left: 23px;
      }

      .macd-chip {
        padding: 0 17px 0 13px;
        width: 349px;
      }

      .macd-value {
        margin-left: 21px;
      }

      .diff {
        margin-left: 14px;
      }

      .kdj-chip {
        padding: 0 17px 0 13px;
        width: 259px;
      }

      .k-value {
        margin-left: 20px;
      }

      .d-value {
        margin-left: 19px;
      }

      .j-value {
        margin-left: 22px;
      }

      .help {
        fill: none;
        margin-left: 8px;
        stroke: #bbb;
        stroke-width: 3;
      }

      .mark {
        fill: #bbb;
        stroke: none;
      }

      .link {
        color: #4c8edb;
        font: 500 41.500px "Noto Sans CJK SC", sans-serif;
        line-height: 54px;
        margin: 0 0 2px auto;
      }

      .red {
        color: #d93a3a;
      }

      .orange {
        color: #ee7643;
      }

      .sky {
        color: #4ba9e4;
      }

      .green {
        color: #3b9426;
      }

      .plum {
        color: #c2477f;
      }

      .vol-up {
        fill: #fff;
        stroke: #d05050;
        stroke-width: 2.400;
      }

      .flat {
        fill: #e04040;
      }

      .vol-down {
        fill: #2f6615;
      }

      .macd-up {
        stroke: #c93a3a;
        stroke-width: 2.800;
      }

      .macd-down {
        stroke: #3b9426;
        stroke-width: 2.800;
      }

      .dark {
        stroke: #303030;
        stroke-width: 3.600;
      }

      .amber {
        stroke: #e9784a;
        stroke-width: 3.600;
      }

      .purple {
        stroke: #bd4a80;
        stroke-width: 3.600;
      }
    `
  ];
}

@customElement("bottom-nav")
export class BottomNav extends LitElement {
  private renderItem(text: string, icon: unknown) {
    return html`
      <div class="item">
        <svg width="72" height="72" viewBox="0 0 72 72">${icon}</svg>
        <span>${text}</span>
      </div>
    `;
  }

  protected render() {
    return html`
      <div class="nav">
        <div class="index">
          <svg width="32" height="18" viewBox="0 0 32 18"><path d="M16 0l16 18H0z" fill="#b0b0b0" /></svg>
          <span>上证指数</span>
          ${fit("4132.12", 136, 43, "value")}
        </div>
        ${this.renderItem(
          "下单",
          svg`<path d="M14 6.500h44q6 0 6 6v37L52 67.500H14q-6 0-6-6v-49q0-6 6-6zM16 21.500h40M16 30h40M16 38.500h40M16 47h28" />`
        )}
        ${this.renderItem(
          "诊股",
          svg`<path d="M9 16.500h54q5 0 5 5v39q0 5-5 5H9q-5 0-5-5v-39q0-5 5-5zM23 9.500h27M12 68h12M47 68h12M36 29v24M24 41h24" />`
        )}
        ${this.renderItem("删自选", svg`<path d="M8.500 8.500h55v55h-55zM20.500 36h31" />`)}
        ${this.renderItem("功能", svg`<circle cx="36" cy="36" r="29" /><path d="M23 28h27M23 45h27" />`)}
      </div>
      <div class="home"></div>
    `;
  }

  static styles = [
    shared,
    css`
      :host {
        background: #242424;
        display: block;
        height: 235px;
      }

      .nav {
        color: #dcdcdc;
        display: grid;
        font: 41.500px "Noto Sans CJK SC", sans-serif;
        grid-template-columns: 292px repeat(4, 245px);
        height: 196px;
        line-height: 44px;
      }

      .index,
      .item {
        align-items: center;
        display: flex;
        flex-direction: column;
      }

      .index {
        color: #9496a3;
        padding-top: 13px;
      }

      .index span {
        margin-top: 20px;
      }

      .index .value {
        color: #19f019;
        margin-top: 29px;
      }

      .item {
        padding-top: 22px;
      }

      .item svg {
        fill: none;
        stroke: #dcdcdc;
        stroke-width: 3.400;
      }

      .item span {
        margin-top: 9px;
      }

      .home {
        background: #919191;
        border-radius: 7px;
        height: 14px;
        margin: 0 auto;
        width: 420px;
      }
    `
  ];
}

@customElement("app-root")
export class AppRoot extends LitElement {
  protected render() {
    return html`
      <div class="top">
        <status-bar></status-bar>
        <stock-header name="*ST正平" code="603843"></stock-header>
      </div>
      <quote-panel></quote-panel>
      <period-tabs></period-tabs>
      <candle-chart></candle-chart>
      <indicator-panels></indicator-panels>
      <div class="gap"></div>
      <bottom-nav></bottom-nav>
    `;
  }

  static styles = css`
    :host {
      background: #fff;
      display: block;
      height: 2772px;
      overflow: hidden;
      width: 1272px;
    }

    .top {
      background: #f12f37;
      height: 309px;
      margin-bottom: 1px;
    }

    .gap {
      border-bottom: 21px solid #fff;
      background: #f3f3f3;
      height: 14px;
    }
  `;
}
